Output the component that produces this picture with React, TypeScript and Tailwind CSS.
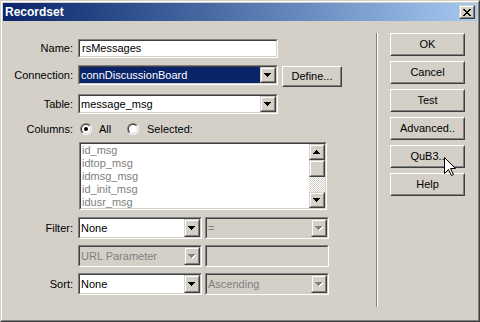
import type { ReactNode } from "react";

type Box = { className?: string; children?: ReactNode };

const Sunken = ({ className = "", inner = "bg-white", children }: Box & { inner?: string }) => (
  <div className={`border border-[#808080] border-r-white border-b-white ${className}`}>
    <div className={`flex h-full border border-[#404040] border-r-[#d4d0c8] border-b-[#d4d0c8] ${inner}`}>
      {children}
    </div>
  </div>
);

const PushButton = ({ className = "", children }: Box) => (
  <div className={`border border-white border-r-[#404040] border-b-[#404040] bg-[#d4d0c8] ${className}`}>
    <div className="flex h-full items-center justify-center border border-transparent border-r-[#808080] border-b-[#808080]">
      {children}
    </div>
  </div>
);

const SmallButton = ({ className = "", children }: Box) => (
  <div className={`border border-[#d4d0c8] border-r-[#404040] border-b-[#404040] bg-[#d4d0c8] ${className}`}>
    <div className="flex h-full items-center justify-center border border-white border-r-[#808080] border-b-[#808080]">
      {children}
    </div>
  </div>
);

const DOWN = "M0 0h7v1h-1v1h-1v1h-1v1h-1v-1h-1v-1h-1v-1h-1z";
const UP = "M3 0h1v1h1v1h1v1h1v1h-7v-1h1v-1h1v-1h1z";

const Arrow = ({ up = false, disabled = false }: { up?: boolean; disabled?: boolean }) => (
  <svg width="8" height="5" viewBox="0 0 8 5" shapeRendering="crispEdges">
    {disabled && <path d={up ? UP : DOWN} fill="#fff" transform="translate(1 1)" />}
    <path d={up ? UP : DOWN} fill={disabled ? "#808080" : "#000"} />
  </svg>
);

const Combo = ({
  className = "",
  text,
  selected = false,
  disabled = false,
}: {
  className?: string;
  text: string;
  selected?: boolean;
  disabled?: boolean;
}) => (
  <Sunken className={className} inner={disabled ? "bg-[#d4d0c8]" : "bg-white"}>
    <div
      className={`flex flex-1 items-center pl-px ${selected ? "bg-[#0a246a] text-white" : ""} ${
        disabled ? "text-[#808080]" : ""
      }`}
    >
      {text}
    </div>
    <SmallButton className="h-full w-[16px]">
      <Arrow disabled={disabled} />
    </SmallButton>
  </Sunken>
);

const Label = ({ children }: Box) => (
  <span className="flex h-full w-[70px] items-center justify-end">{children}</span>
);

const Radio = ({ id, checked }: { id: string; checked?: boolean }) => (
  <svg width="12" height="12" viewBox="0 0 12 12">
    <defs>
      <linearGradient id={`${id}o`} x1="0" y1="0" x2="1" y2="1">
        <stop offset="0.5" stopColor="#808080" />
        <stop offset="0.5" stopColor="#ffffff" />
      </linearGradient>
      <linearGradient id={`${id}i`} x1="0" y1="0" x2="1" y2="1">
        <stop offset="0.5" stopColor="#404040" />
        <stop offset="0.5" stopColor="#d4d0c8" />
      </linearGradient>
    </defs>
    <circle cx="6" cy="6" r="6" fill={`url(#${id}o)`} />
    <circle cx="6" cy="6" r="5" fill={`url(#${id}i)`} />
    <circle cx="6" cy="6" r="4" fill="#fff" />
    {checked && <circle cx="6" cy="6" r="2" fill="#000" />}
  </svg>
);

const columns = ["id_msg", "idtop_msg", "idmsg_msg", "id_init_msg", "idusr_msg"];
const actions = ["OK", "Cancel", "Test", "Advanced..", "QuB3..", "Help"];

export default function App() {
  return (
    <div className="relative h-[322px] w-[480px] select-none border border-[#d4d0c8] border-r-[#404040] border-b-[#404040] bg-[#d4d0c8] font-['Liberation_Sans',Arial,sans-serif] text-[11px] leading-none text-black">
      <div className="flex h-full flex-col border border-white border-r-[#808080] border-b-[#808080] p-px">
        {/* title bar */}
        <div className="flex h-[18px] items-center bg-gradient-to-r from-[#0a246a] to-[#a6caf0] px-[2px]">
          <span className="flex-1 text-[12px] font-bold text-white">Recordset</span>
          <SmallButton className="h-[14px] w-[16px]">
            <svg width="8" height="7" viewBox="0 0 8 7" shapeRendering="crispEdges">
              <path
                d="M0 0h2v1h-2z M6 0h2v1h-2z M1 1h2v1h-2z M5 1h2v1h-2z M2 2h4v1h-4z M3 3h2v1h-2z M2 4h4v1h-4z M1 5h2v1h-2z M5 5h2v1h-2z M0 6h2v1h-2z M6 6h2v1h-2z"
                fill="#000"
              />
            </svg>
          </SmallButton>
        </div>

        <div className="flex flex-1">
          {/* form */}
          <div className="w-[373px] pt-[18px]">
            <div className="flex h-[19px]">
              <Label>Name:</Label>
              <Sunken className="ml-[5px] h-full w-[200px]">
                <span className="flex items-center pl-[2px]">rsMessages</span>
              </Sunken>
            </div>

            <div className="mt-[7px] flex items-start">
              <div className="h-[20px]">
                <Label>Connection:</Label>
              </div>
              <Combo className="ml-[5px] h-[20px] w-[200px]" text="connDiscussionBoard" selected />
              <PushButton className="ml-[4px] mt-px h-[21px] w-[60px]">Define...</PushButton>
            </div>

            <div className="mt-[7px] flex h-[20px]">
              <Label>Table:</Label>
              <Combo className="ml-[5px] h-full w-[200px]" text="message_msg" />
            </div>

            <div className="mt-[8px] flex h-[14px] items-center">
              <Label>Columns:</Label>
              <span className="ml-[7px] flex">
                <Radio id="rall" checked />
              </span>
              <span className="ml-[7px] w-[21px]">All</span>
              <span className="ml-[7px] flex">
                <Radio id="rsel" />
              </span>
              <span className="ml-[8px]">Selected:</span>
            </div>

            <Sunken className="ml-[76px] mt-[6px] h-[68px] w-[248px]">
              <div className="flex-1 pl-px text-[#808080]">
                {columns.map((c) => (
                  <div key={c} className="leading-[13px]">
                    {c}
                  </div>
                ))}
              </div>
              <div className="flex w-[16px] flex-col">
                <SmallButton className="h-[16px]">
                  <Arrow up />
                </SmallButton>
                <SmallButton className="h-[17px]" />
                <div className="flex-1 bg-[repeating-conic-gradient(#ffffff_0_25%,#d4d0c8_0_50%)] bg-[length:2px_2px]" />
                <SmallButton className="h-[16px]">
                  <Arrow />
                </SmallButton>
              </div>
            </Sunken>

            <div className="mt-[7px] flex h-[22px]">
              <Label>Filter:</Label>
              <Combo className="ml-[5px] h-full w-[124px]" text="None" />
              <Combo className="ml-[3px] h-full w-[124px]" text="=" disabled />
            </div>

            <div className="mt-[6px] flex h-[22px]">
              <Label />
              <Combo className="ml-[5px] h-full w-[124px]" text="URL Parameter" disabled />
              <Sunken className="ml-[3px] h-full w-[124px]" inner="bg-[#d4d0c8]" />
            </div>

            <div className="mt-[6px] flex h-[22px]">
              <Label>Sort:</Label>
              <Combo className="ml-[5px] h-full w-[124px]" text="None" />
              <Combo className="ml-[3px] h-full w-[124px]" text="Ascending" disabled />
            </div>
          </div>

          {/* separator */}
          <div className="mt-[12px] h-[274px] w-[2px] border-l border-r border-l-[#808080] border-r-white" />

          {/* buttons */}
          <div className="flex flex-col gap-[5px] pl-[12px] pt-[12px]">
            {actions.map((a) => (
              <PushButton key={a} className="h-[23px] w-[75px]">
                {a}
              </PushButton>
            ))}
          </div>
        </div>
      </div>

      {/* mouse pointer */}
      <svg
        className="absolute left-[443px] top-[156px]"
        width="13"
        height="20"
        viewBox="0 0 13 20"
      >
        <path
          d="M0.5 0.5 L0.5 16.5 L4.5 12.5 L7.5 18.5 L9.5 17.5 L6.5 11.5 L11.5 11.5 Z"
          fill="#fff"
          stroke="#000"
          strokeWidth="1"
          strokeLinejoin="miter"
        />
      </svg>
    </div>
  );
}
